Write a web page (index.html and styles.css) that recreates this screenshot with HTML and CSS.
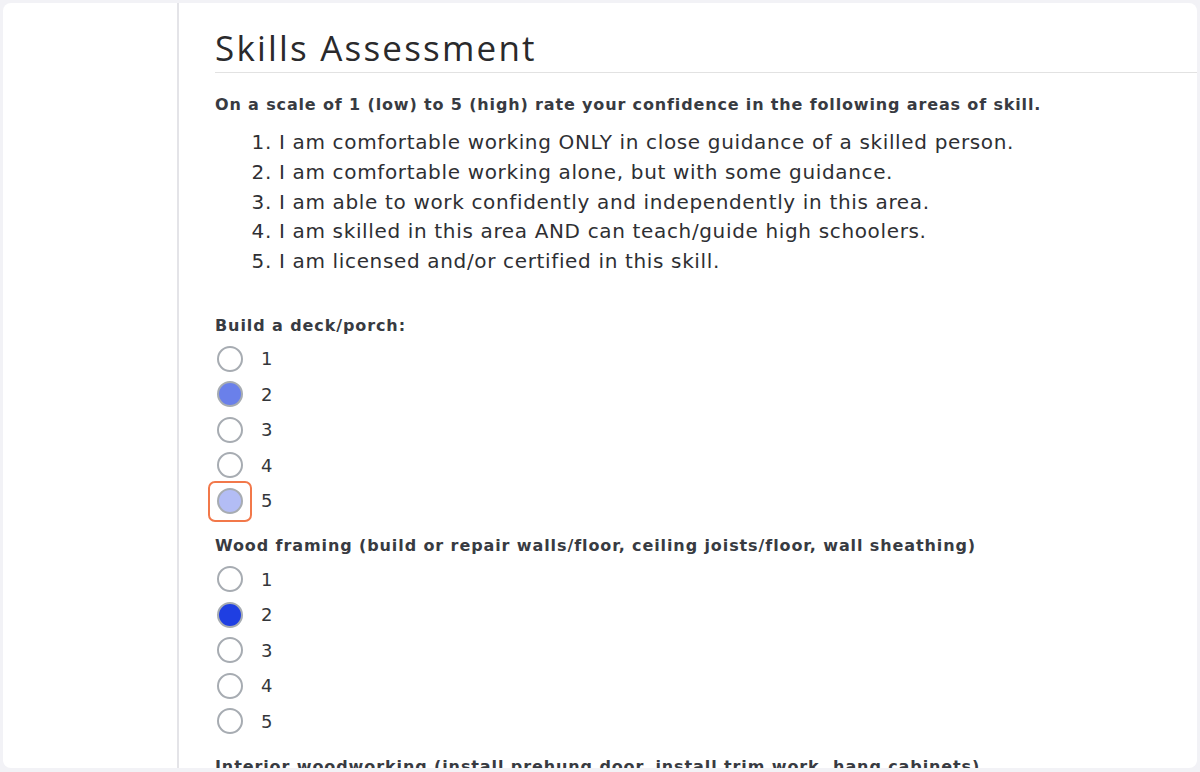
FILE: index.html
```html
<!DOCTYPE html>
<html lang="en">

<head>
    <meta charset="UTF-8">
    <title>Skills Assessment</title>
    <link rel="stylesheet" href="styles.css">
</head>

<body>
    <div class="frame">
        <aside class="sidebar"></aside>

        <main class="content">
            <h1>Skills Assessment</h1>

            <p class="intro">On a scale of 1 (low) to 5 (high) rate your confidence in the following areas of skill.</p>
            <ol class="scale">
                <li>I am comfortable working ONLY in close guidance of a skilled person.</li>
                <li>I am comfortable working alone, but with some guidance.</li>
                <li>I am able to work confidently and independently in this area.</li>
                <li>I am skilled in this area AND can teach/guide high schoolers.</li>
                <li>I am licensed and/or certified in this skill.</li>
            </ol>

            <fieldset class="question">
                <legend>Build a deck/porch:</legend>
                <label class="option"><span class="radio"></span>1</label>
                <label class="option"><span class="radio checked-soft"></span>2</label>
                <label class="option"><span class="radio"></span>3</label>
                <label class="option"><span class="radio"></span>4</label>
                <label class="option"><span class="focus"><span class="radio hover"></span></span>5</label>
            </fieldset>

            <fieldset class="question">
                <legend>Wood framing (build or repair walls/floor, ceiling joists/floor, wall sheathing)</legend>
                <label class="option"><span class="radio"></span>1</label>
                <label class="option"><span class="radio checked"></span>2</label>
                <label class="option"><span class="radio"></span>3</label>
                <label class="option"><span class="radio"></span>4</label>
                <label class="option"><span class="radio"></span>5</label>
            </fieldset>

            <fieldset class="question">
                <legend>Interior woodworking (install prehung door, install trim work, hang cabinets)</legend>
                <label class="option"><span class="radio"></span>1</label>
                <label class="option"><span class="radio"></span>2</label>
            </fieldset>
        </main>
    </div>
</body>

</html>
```

FILE: styles.css
```css
html,
body {
    margin: 0;
    height: 100%;
    overflow: hidden;
}

body {
    background-color: #f2f2f6;
    padding: 3px 3px 4px 3px;
    box-sizing: border-box;
    font-family: "DejaVu Sans", "Liberation Sans", sans-serif;
    color: #2e2f33;
}

.frame {
    height: 100%;
    background-color: #fff;
    border-radius: 8px;
    overflow: hidden;
    display: flex;
}

.sidebar {
    width: 174px;
    flex: none;
    border-right: 2px solid #e4e4e8;
}

.content {
    flex: 1;
    padding-left: 36px;
}

h1 {
    margin: 0;
    padding: 25px 0 4px 0;
    font-family: "Open Sans", "DejaVu Sans", sans-serif;
    font-size: 35px;
    line-height: 40px;
    font-weight: 400;
    color: #2a2a2c;
    letter-spacing: 2.2px;
    border-bottom: 1px solid #e2e2e2;
}

.intro {
    margin: 22px 0 0 0;
    font-size: 16px;
    line-height: 20px;
    font-weight: 700;
    letter-spacing: 0.85px;
    color: #383b42;
}

.scale {
    margin: 13px 0 0 0;
    padding-left: 64px;
    font-size: 20px;
    line-height: 29.8px;
    letter-spacing: 0.65px;
    color: #2e2f33;
}

.question {
    border: 0;
    margin: 39px 0 0 0;
    padding: 0;
}

.question + .question {
    margin-top: 18px;
}

.question legend {
    padding: 0;
    font-size: 16px;
    line-height: 20px;
    font-weight: 700;
    letter-spacing: 0.9px;
    color: #383b42;
    margin-bottom: 5px;
}

.option {
    display: flex;
    align-items: center;
    height: 35.5px;
    font-size: 18px;
    color: #34363a;
}

.radio {
    width: 22px;
    height: 22px;
    margin: 0 18px 0 2px;
    border: 2.5px solid #a7acb2;
    border-radius: 50%;
    background-color: #fff;
    flex: none;
}

.radio.checked-soft {
    background-color: #6a80ea;
}

.radio.hover {
    background-color: #b3bdf5;
}

.radio.checked {
    background-color: #1f3fe2;
}

.focus {
    position: relative;
    display: flex;
}

.focus::before {
    content: "";
    position: absolute;
    left: -7px;
    top: -7px;
    width: 40px;
    height: 37px;
    border: 2px solid #f2784a;
    border-radius: 7px;
}
```
